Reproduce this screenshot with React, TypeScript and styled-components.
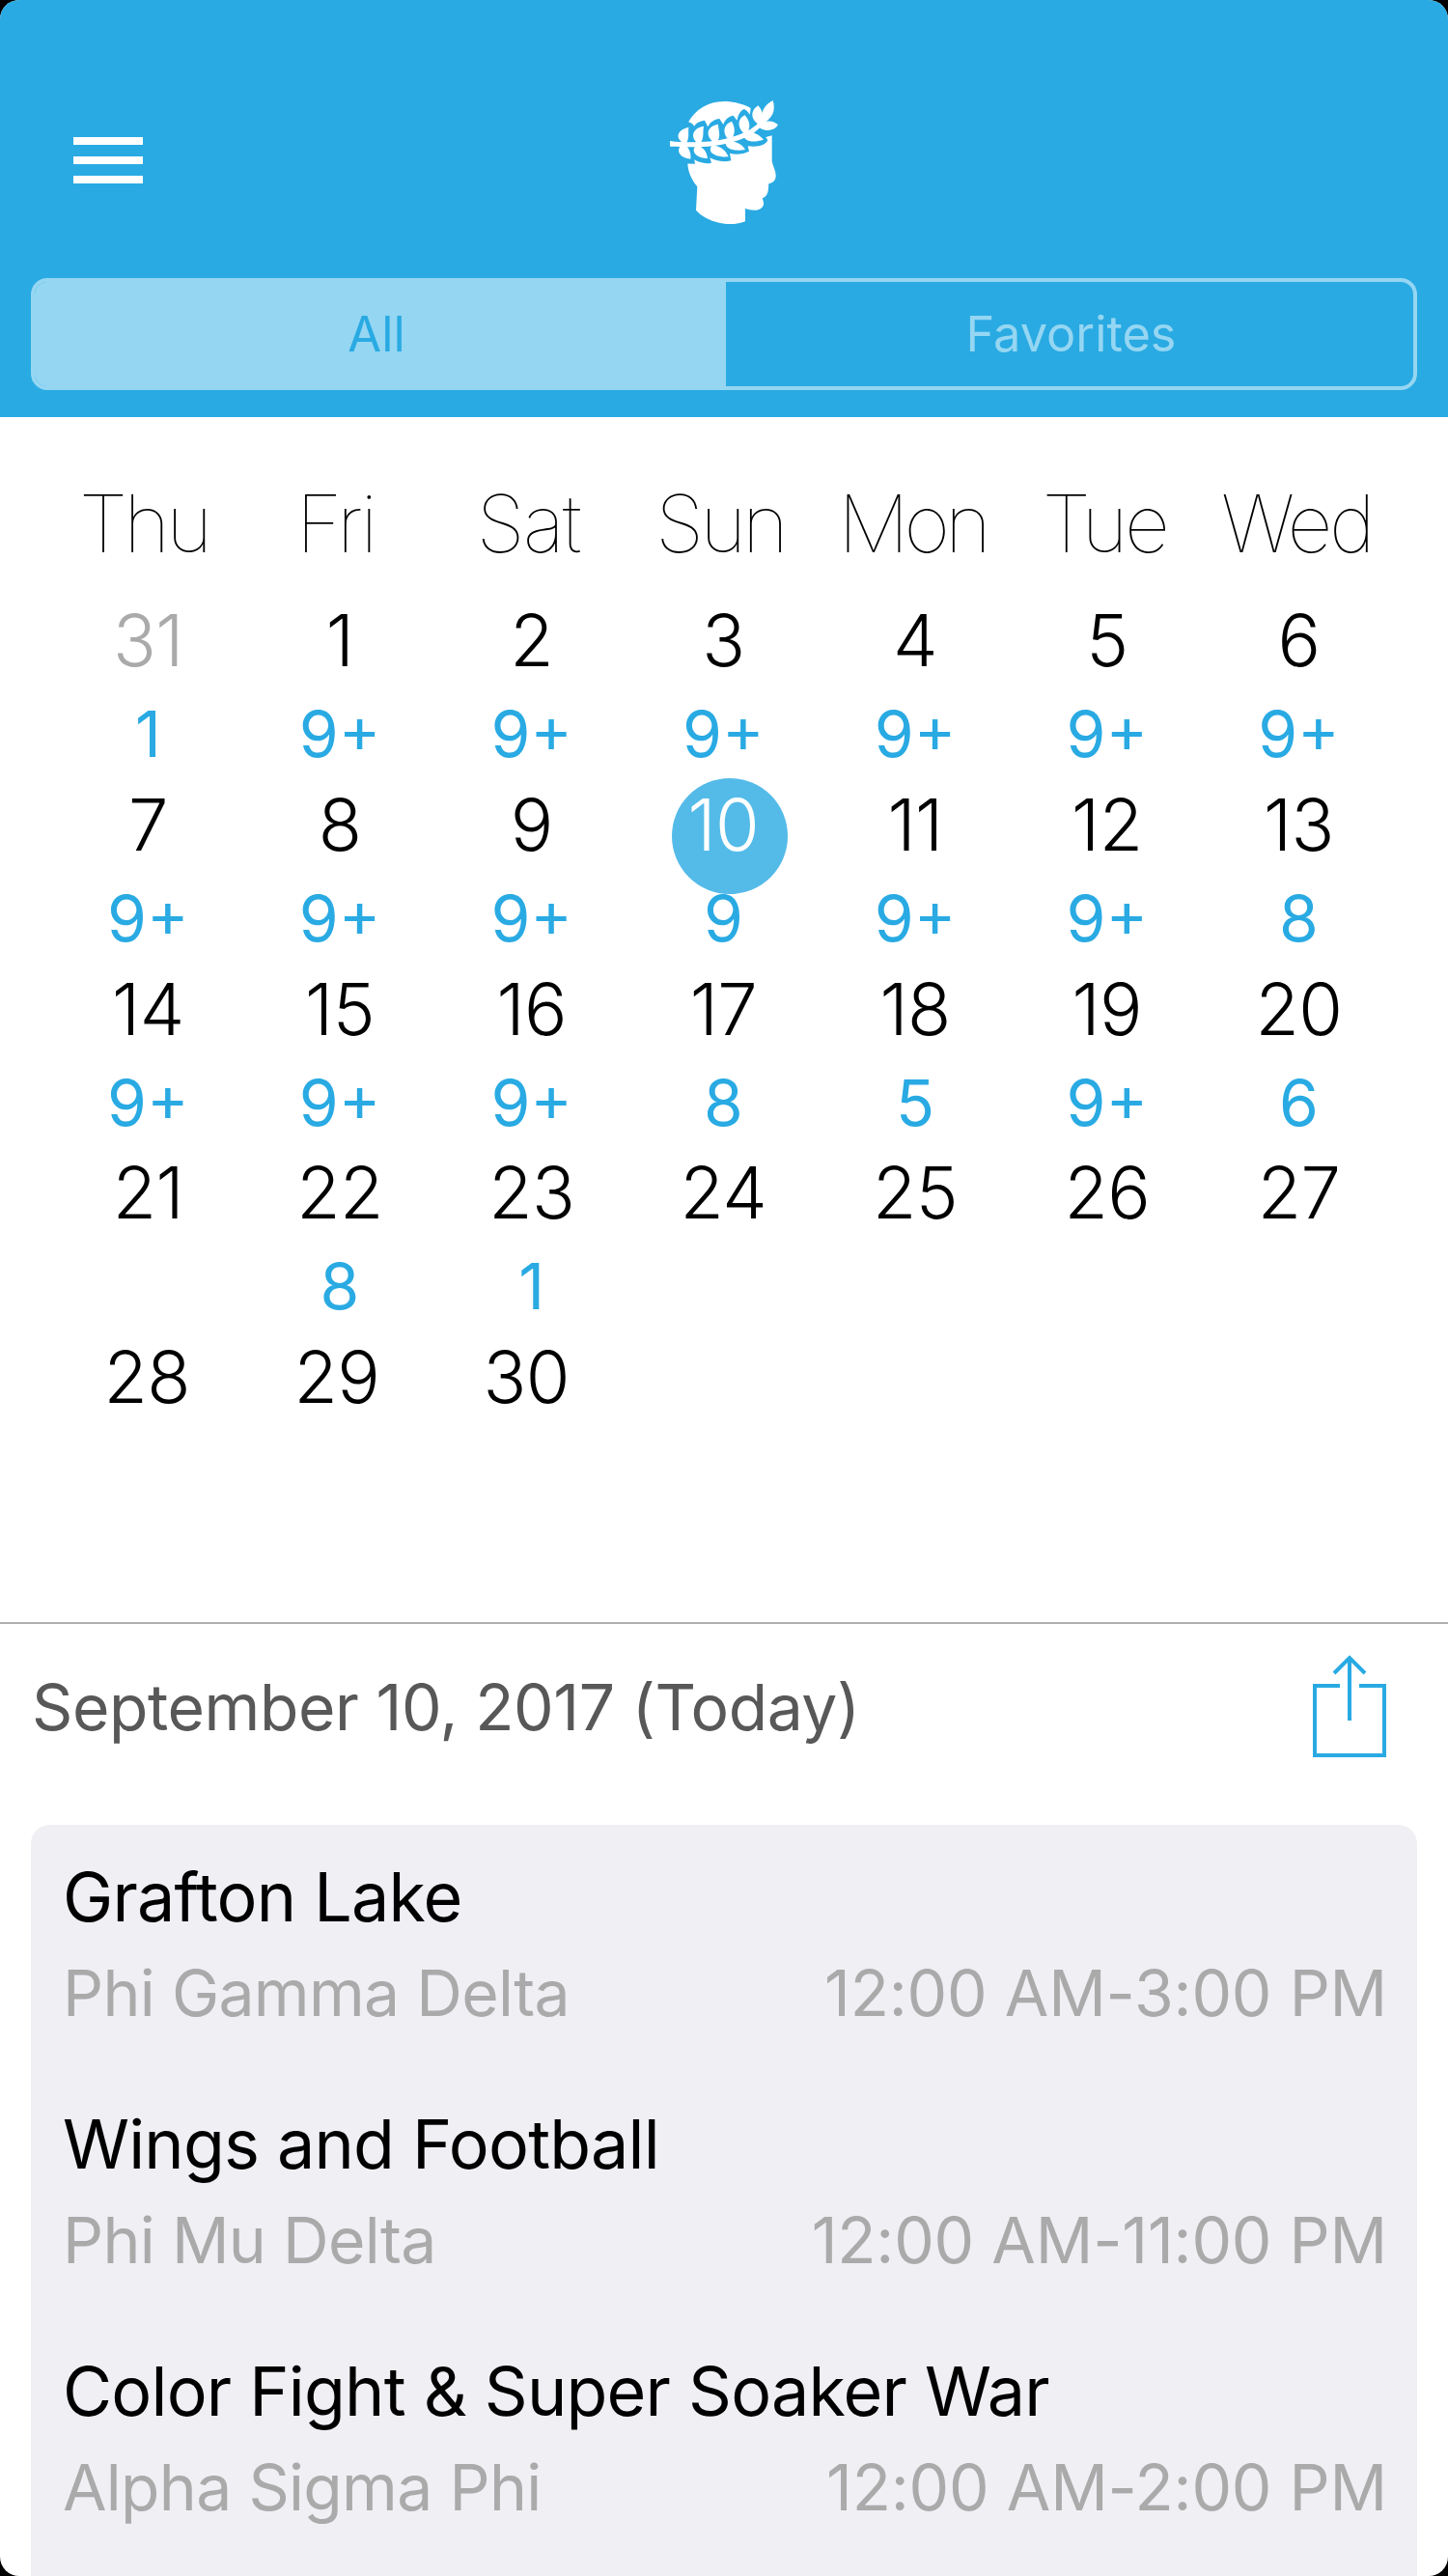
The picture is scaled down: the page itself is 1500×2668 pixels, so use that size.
import React from "react";
import styled, { createGlobalStyle } from "styled-components";

const BLUE = "#29aae3";
const PALE = "#95d6f2";

const GlobalStyle = createGlobalStyle`
  html, body { margin: 0; background: #000; }
  body { font-family: Inter, "Liberation Sans", sans-serif; }
  * { box-sizing: border-box; }
`;

const Screen = styled.main`
  display: flex;
  flex-direction: column;
  width: 1500px;
  height: 2668px;
  overflow: hidden;
  border-radius: 20px;
  background: #fff;
`;

const Header = styled.header`
  height: 432px;
  flex: none;
  padding: 90px 32px 0;
  background: ${BLUE};
`;

const NavBar = styled.div`
  display: grid;
  grid-template-columns: 1fr 160px 1fr;
  height: 198px;
`;

const MenuButton = styled.button`
  display: flex;
  flex-direction: column;
  gap: 12px;
  width: 72px;
  margin: 52px 0 0 44px;
  padding: 0;
  border: 0;
  background: none;
  align-self: start;
`;

const MenuBar = styled.span`
  height: 8px;
  width: 72px;
  background: #fff;
`;

const Segmented = styled.div`
  display: flex;
  height: 116px;
  border: 4px solid ${PALE};
  border-radius: 17px;
  overflow: hidden;
`;

const Segment = styled.button<{ $active?: boolean }>`
  flex: none;
  width: ${(p) => (p.$active ? "716px" : "712px")};
  padding: ${(p) => (p.$active ? "0 8px 0 0" : "0 0 0 3px")};
  border: 0;
  font: 400 50.5px/108px Inter, sans-serif;
  color: ${(p) => (p.$active ? BLUE : PALE)};
  background: ${(p) => (p.$active ? PALE : "transparent")};
`;

const Calendar = styled.section`
  height: 1248px;
  flex: none;
  padding: 61px 55px 0 54px;
`;

const Week = styled.div<{ $pitch?: number }>`
  display: grid;
  grid-template-columns: repeat(7, ${(p) => p.$pitch ?? 198.7}px);
  height: 190.8px;
`;

const WeekHeader = styled(Week)`
  height: 120px;
  margin-left: -3px;
`;

const Weekday = styled.div<{ $tracking: number }>`
  font-size: 82px;
  font-weight: 100;
  line-height: 100px;
  letter-spacing: ${(p) => p.$tracking}px;
  padding-right: 3px;
  text-align: center;
  white-space: nowrap;
  color: #000;
`;

const Day = styled.div`
  position: relative;
  text-align: center;
`;

const DayNumber = styled.div<{ $tone: "normal" | "muted" | "today" }>`
  position: relative;
  font-size: 74px;
  font-weight: 300;
  line-height: 100px;
  letter-spacing: -0.6px;
  color: ${(p) => ({ normal: "#000", muted: "#aaa", today: "#fff" })[p.$tone]};
`;

const TodayDisc = styled.span`
  position: absolute;
  left: 46px;
  top: 2px;
  width: 120px;
  height: 120px;
  border-radius: 50%;
  background: #54bbe9;
`;

const Count = styled.div`
  position: relative;
  margin-top: 6px;
  font-size: 66px;
  font-weight: 400;
  line-height: 83px;
  color: ${BLUE};
`;

const DateBar = styled.div`
  display: flex;
  justify-content: space-between;
  align-items: center;
  flex: none;
  height: 174px;
  padding: 0 62px 0 33px;
  border-top: 2px solid #b0b0b0;
`;

const DateTitle = styled.h1`
  margin: 0;
  font-size: 66px;
  font-weight: 400;
  line-height: 100px;
  letter-spacing: -0.42px;
  color: #585858;
`;

const EventCard = styled.section`
  display: flex;
  flex-direction: column;
  gap: 56px;
  flex: 1;
  margin: 36px 32px 0;
  padding: 24px 31px 0 33px;
  border-radius: 20px 20px 0 0;
  background: #efeff4;
`;

const EventTitle = styled.h2`
  margin: 0;
  padding-top: 1px;
  font-size: 70px;
  font-weight: 400;
  line-height: 99px;
  letter-spacing: -0.8px;
  color: #000;
`;

const EventMeta = styled.div`
  display: flex;
  justify-content: space-between;
  font-size: 66px;
  line-height: 100px;
  color: #aaa;
`;

const Host = styled.span`
  letter-spacing: -0.7px;
`;

const Time = styled.span`
  letter-spacing: -0.2px;
`;

const leaves = [
  "M120 178C86 162 92 134 130 125C128 146 134 162 120 178Z",
  "M164 178C134 162 138 128 177 122C173 144 180 160 164 178Z",
  "M214 176C180 156 184 122 222 116C222 136 234 156 214 176Z",
  "M258 168C232 144 238 116 264 107C276 128 276 150 258 168Z",
  "M308 150C278 128 282 98 305 88C322 108 324 128 308 150Z",
  "M352 120C318 100 324 72 346 58C360 72 366 96 352 120Z",
  "M356 118C350 78 368 54 392 42C402 76 390 98 356 118Z",
  "M345 122C365 102 392 102 408 118C396 138 365 142 345 122Z",
  "M114 178C86 192 100 222 136 224C138 204 132 188 114 178Z",
  "M156 180C134 196 150 222 189 222C186 200 176 188 156 180Z",
  "M204 180C184 202 212 220 254 217C244 194 226 184 204 180Z",
  "M246 170C240 190 268 202 306 195C294 174 270 166 246 170Z",
  "M298 144C302 172 330 174 363 164C346 144 322 134 298 144Z",
];
const stem = "M72 168L90 170C160 174 220 172 270 154C310 142 335 126 354 104L360 118C340 142 310 160 270 170C220 186 150 190 90 185L72 185Z";

const Logo = () => (
  <svg width="160" height="150" viewBox="0 0 480 450" aria-label="Logo">
    <path
      fill="#fff"
      d="M130 108C150 72 190 45 240 45C275 45 305 55 323 66L328 100L350 150L389 150L389 230C392 248 402 260 401 278C400 294 388 299 379 300L378 315C377 333 370 342 359 346C361 352 364 358 363 366C357 383 340 385 320 382L306 378L306 418C285 427 250 428 225 422C195 415 170 402 153 383L157 310C138 288 128 262 127 238Z"
    />
    <path
      fill={BLUE}
      d="M120 108C137 108 143 116 148 122C155 110 166 106 180 104C184 112 187 118 190 124C198 108 210 101 226 99C230 104 234 112 238 117C243 100 254 92 269 89C274 96 278 100 281 104C284 84 292 74 302 69C310 73 315 78 320 86L324 64L345 58L392 70L392 150L370 156L376 166C368 182 346 188 314 184L318 200C300 209 278 212 258 206L262 229C238 235 212 230 196 220L201 236C182 240 164 236 148 226L150 239L110 238Z"
    />
    <g fill="#fff">
      {leaves.map((d) => <path key={d} d={d} />)}
      <path d={stem} />
    </g>
  </svg>
);

const ShareIcon = () => (
  <svg width="80" height="108" viewBox="0 0 80 108" fill="none" stroke={BLUE} strokeWidth="4">
    <path d="M30 32H4V104H76V32H50" />
    <path d="M40 68V3M24 19L40 3L56 19" />
  </svg>
);

const weekdays = [
  { name: "Thu", tracking: -4 },
  { name: "Fri", tracking: -2 },
  { name: "Sat", tracking: -2 },
  { name: "Sun", tracking: -4 },
  { name: "Mon", tracking: -5 },
  { name: "Tue", tracking: -3.5 },
  { name: "Wed", tracking: -3.5 },
];
const counts = [
  ["1", "9+", "9+", "9+", "9+", "9+", "9+"],
  ["9+", "9+", "9+", "9", "9+", "9+", "8"],
  ["9+", "9+", "9+", "8", "5", "9+", "6"],
  ["", "8", "1", "", "", "", ""],
  ["", "", ""],
];
const TODAY = 10;

const events = [
  { title: "Grafton Lake", host: "Phi Gamma Delta", time: "12:00 AM-3:00 PM" },
  { title: "Wings and Football", host: "Phi Mu Delta", time: "12:00 AM-11:00 PM" },
  { title: "Color Fight & Super Soaker War", host: "Alpha Sigma Phi", time: "12:00 AM-2:00 PM" },
];

export default function App() {
  return (
    <>
      <GlobalStyle />
      <Screen>
        <Header>
          <NavBar>
            <MenuButton aria-label="Menu">
              <MenuBar />
              <MenuBar />
              <MenuBar />
            </MenuButton>
            <Logo />
          </NavBar>
          <Segmented>
            <Segment $active>All</Segment>
            <Segment>Favorites</Segment>
          </Segmented>
        </Header>
        <Calendar>
          <WeekHeader $pitch={199}>
            {weekdays.map((d) => (
              <Weekday key={d.name} $tracking={d.tracking}>{d.name}</Weekday>
            ))}
          </WeekHeader>
          {counts.map((week, w) => (
            <Week key={w} $pitch={week.length < 7 ? 196.5 : undefined}>
              {week.map((count, i) => {
                const day = w * 7 + i;
                const tone = day === 0 ? "muted" : day === TODAY ? "today" : "normal";
                return (
                  <Day key={i}>
                    {day === TODAY && <TodayDisc />}
                    <DayNumber $tone={tone}>{day === 0 ? 31 : day}</DayNumber>
                    <Count>{count}</Count>
                  </Day>
                );
              })}
            </Week>
          ))}
        </Calendar>
        <DateBar>
          <DateTitle>September 10, 2017 (Today)</DateTitle>
          <ShareIcon />
        </DateBar>
        <EventCard>
          {events.map((e) => (
            <article key={e.title}>
              <EventTitle>{e.title}</EventTitle>
              <EventMeta>
                <Host>{e.host}</Host>
                <Time>{e.time}</Time>
              </EventMeta>
            </article>
          ))}
        </EventCard>
      </Screen>
    </>
  );
}
